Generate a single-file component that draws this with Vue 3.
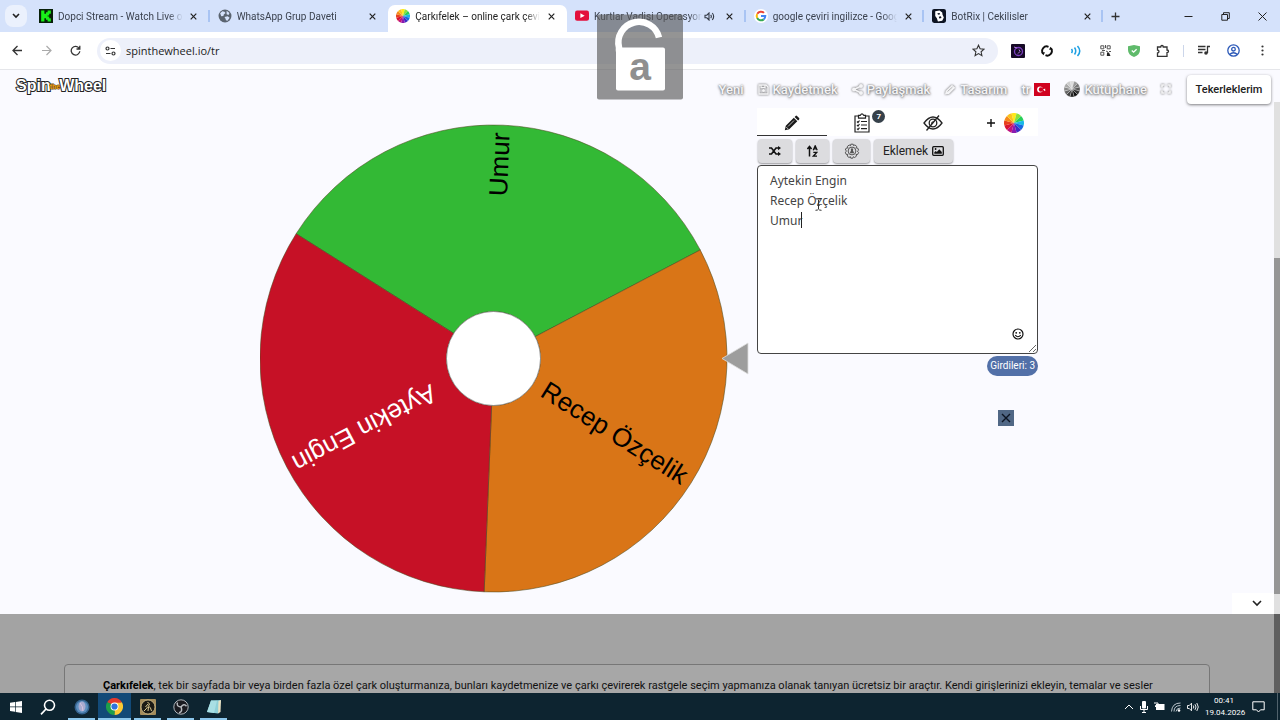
<script setup>
import { ref } from 'vue'

const tabs = [
  { icon: 'kick', title: 'Dopci Stream - Watch Live on' },
  { icon: 'globe', title: 'WhatsApp Grup Daveti' },
  { icon: 'wheel', title: 'Çarkıfelek – online çark çevirin', active: true },
  { icon: 'yt', title: 'Kurtlar Vadisi Operasyon', sound: true },
  { icon: 'google', title: 'google çeviri ingilizce - Goog' },
  { icon: 'botrix', title: 'BotRix | Cekilisler' },
]
const entries = ref('Aytekin Engin\nRecep Özçelik\nUmur')

const C = { x: 233.5, y: 235.5, r: 233.5, hole: 47 }
const slices = [
  { name: 'Umur', from: -147.7, color: '#33b935', ink: '#000' },
  { name: 'Recep Özçelik', from: -27.7, color: '#d97517', ink: '#000' },
  { name: 'Aytekin Engin', from: 92.3, color: '#c61126', ink: '#fff' },
]
const pt = (r, deg) => {
  const a = (deg * Math.PI) / 180
  return `${(C.x + r * Math.cos(a)).toFixed(2)} ${(C.y + r * Math.sin(a)).toFixed(2)}`
}
const ring = (s) =>
  `M${pt(C.hole, s.from)}L${pt(C.r, s.from)}A${C.r} ${C.r} 0 0 1 ${pt(C.r, s.from + 120)}L${pt(C.hole, s.from + 120)}A${C.hole} ${C.hole} 0 0 0 ${pt(C.hole, s.from)}Z`

const hues = ['#ffe81a', '#8be03a', '#27cf5a', '#19b8e8', '#1669e0', '#3d2bc4', '#8a1bb0', '#c0127e', '#d81330', '#e8401c', '#f58a1c', '#fbc21b']
const greys = ['#ddd', '#999', '#777', '#555', '#333', '#111', '#222', '#444', '#666', '#888', '#aaa', '#ccc']
const wedge = (i) => {
  const a = ((i * 30 - 105) * Math.PI) / 180
  const b = ((i * 30 - 75) * Math.PI) / 180
  return `M10 10L${(10 + 10 * Math.cos(a)).toFixed(2)} ${(10 + 10 * Math.sin(a)).toFixed(2)}A10 10 0 0 1 ${(10 + 10 * Math.cos(b)).toFixed(2)} ${(10 + 10 * Math.sin(b)).toFixed(2)}Z`
}
</script>

<template>
  <div class="desktop">
    <div class="tabstrip">
      <button class="tab-search" aria-label="Sekmelerde ara">
        <svg width="8" height="6" viewBox="0 0 8 6"><path d="M1 1l3 3 3-3" fill="none" stroke="#222" stroke-width="1.6" /></svg>
      </button>
      <div class="tabs">
        <div v-for="(t, i) in tabs" :key="i" class="tab" :class="{ active: t.active, sep: i === 0 || i > 2 }">
          <svg v-if="t.icon === 'kick'" class="fav" viewBox="0 0 13 13"><rect width="13" height="13" fill="#082008" /><path d="M2 1.500h3v3h1.500v-1.500h1.500v-1.500h3v3h-1.500v1.500h-1.500v1h1.500v1.500h1.500v3h-3v-1.500h-1.500v-1.500h-1.500v3h-3z" fill="#18f018" /></svg>
          <svg v-else-if="t.icon === 'globe'" class="fav" viewBox="0 0 13 13"><circle cx="6.500" cy="6.500" r="6" fill="#5b6470" /><path d="M2 4l2-2 2 .6 1 1.200-1.600 1.200-.4 1.600-2 .2zM8 1.600l2.600 2-.8 2-1.800-.8zM6 7.500l3-.8 1.800 1.500-2 2.600-1.400-.4-.4-1.400z" fill="#d5e2fb" /></svg>
          <svg v-else-if="t.icon === 'wheel'" class="fav" viewBox="0 0 20 20"><path v-for="(h, k) in hues" :key="k" :d="wedge(k)" :fill="h" /></svg>
          <svg v-else-if="t.icon === 'yt'" class="fav" viewBox="0 0 13 13"><rect y="1.500" width="13" height="9.500" rx="2" fill="#e3103c" /><path d="M5 4l4 2.200-4 2.200z" fill="#fff" /></svg>
          <svg v-else-if="t.icon === 'google'" class="fav" viewBox="0 0 14 14"><circle cx="7" cy="7" r="7" fill="#fff" /><g fill="none" stroke-width="2"><path d="M3.300 4.800A4.300 4.300 0 0 1 10 3.900" stroke="#ea4335" /><path d="M3.200 9A4.300 4.300 0 0 1 3.200 5" stroke="#fbbc05" /><path d="M3.200 9A4.300 4.300 0 0 0 9.700 10.400" stroke="#34a853" /><path d="M7 7.100h4.300a4.300 4.300 0 0 1-1.600 3.300" stroke="#4285f4" /></g></svg>
          <svg v-else class="fav" viewBox="0 0 13 13"><rect width="13" height="13" rx="2" fill="#0d1423" /><path d="M3 2l4-.5 2.500 1.800.3 2 1.200 2.500-1.500 3-4 .7-1-3-1.500-2z" fill="#fff" /><path d="M5 4l2-.4.6 1.200-2 .6zM6.300 7.300l2-.5.5 1.500-2 .6z" fill="#0d1423" /></svg>
          <span class="title">{{ t.title }}</span>
          <svg v-if="t.sound" class="snd" width="11" height="9" viewBox="0 0 11 9"><path d="M1 3.200h1.800l2.200-2.200v7l-2.200-2.200h-1.800zM6.700 2.800q1.300 1.700 0 3.400M8.300 1q2.700 3.500 0 7" fill="none" stroke="#333a47" stroke-width="1.100" /></svg>
          <button class="close" aria-label="Sekmeyi kapat"><svg width="7" height="7" viewBox="0 0 7 7"><path d="M.7.7l5.600 5.600M6.300.7L.7 6.300" stroke="#222" stroke-width="1.200" /></svg></button>
        </div>
      </div>
      <div class="winctl">
        <button aria-label="Yeni sekme" class="newtab"><svg width="9" height="9" viewBox="0 0 9 9"><path d="M4.500.5v8M.5 4.500h8" stroke="#333" stroke-width="1.300" /></svg></button>
        <button aria-label="Küçült"><svg width="9" height="9" viewBox="0 0 9 9"><path d="M.5 4.500h8" stroke="#222" /></svg></button>
        <button aria-label="Önceki boyut"><svg width="9" height="9" viewBox="0 0 9 9"><path d="M.8 2.500h5.700v5.700H.8zM2.500 2.300V.7h5.800v5.800H6.700" fill="none" stroke="#222" /></svg></button>
        <button aria-label="Kapat"><svg width="9" height="9" viewBox="0 0 9 9"><path d="M.5.5l8 8M8.500.5l-8 8" stroke="#222" /></svg></button>
      </div>
    </div>

    <div class="toolbar">
      <button aria-label="Geri"><svg width="11" height="11" viewBox="0 0 11 11"><path d="M10 5.500H1.500M5.500 1L1 5.500 5.500 10" fill="none" stroke="#333" stroke-width="1.300" /></svg></button>
      <button aria-label="İleri"><svg width="11" height="11" viewBox="0 0 11 11"><path d="M1 5.500h8.500M5.500 1L10 5.500 5.500 10" fill="none" stroke="#aaa" stroke-width="1.200" /></svg></button>
      <button aria-label="Yenile"><svg width="11" height="11" viewBox="0 0 11 11"><path d="M9.200 3.500A4.300 4.300 0 1 0 9.800 6.200M9.800.7v3.300H6.500" fill="none" stroke="#333" stroke-width="1.300" /></svg></button>
      <div class="omni">
        <span class="site"><svg width="11" height="10" viewBox="0 0 11 10"><g fill="none" stroke="#333" stroke-width="1.200"><circle cx="2.500" cy="2.500" r="1.500" /><path d="M5.500 2.500h4.500M1 7.500h4.500" /><circle cx="8.500" cy="7.500" r="1.500" /></g></svg></span>
        <input class="url" aria-label="Adres" value="spinthewheel.io/tr" />
        <button class="star" aria-label="Yer işareti"><svg width="13" height="13" viewBox="0 0 13 13"><path d="M6.500 1.200l1.600 3.600 3.900.4-2.900 2.600.8 3.800-3.400-2-3.400 2 .8-3.800L1 5.200l3.900-.4z" fill="none" stroke="#333" stroke-width="1.100" /></svg></button>
      </div>
      <div class="exts">
        <button aria-label="Eklenti 1"><svg width="14" height="14" viewBox="0 0 14 14"><rect width="14" height="14" rx="1" fill="#160a26" /><circle cx="7.500" cy="7.500" r="4" fill="none" stroke="#7c3fc0" stroke-width="1.300" /><path d="M3 3l3 1M8 5.500l1 2-2 2" stroke="#b37be0" fill="none" /></svg></button>
        <button aria-label="Eklenti 2"><svg width="12" height="12" viewBox="0 0 12 12"><path d="M2 8.500A4.500 4.500 0 0 1 7.500 1.800M10 3.500A4.500 4.500 0 0 1 4.500 10.200" fill="none" stroke="#111" stroke-width="1.900" /><path d="M0 7.500l4-.2-1.500 3zM12 4.500l-4 .2 1.500-3z" fill="#111" /></svg></button>
        <button aria-label="Eklenti 3"><svg width="12" height="12" viewBox="0 0 12 12"><path d="M1.500 4q1.500 2 0 4M4.500 2.500q2.500 3.500 0 7M7.500 1q4.500 5 0 10" fill="none" stroke="#1c9fe3" stroke-width="1.500" /></svg></button>
        <button aria-label="Eklenti 4"><svg width="11" height="11" viewBox="0 0 11 11"><g fill="none" stroke="#555"><path d="M.8.800h3v3H.8zM7.200.800h3v3h-3zM.8 7.200h3v3h-3z" stroke-width="1" /><path d="M5.500 0v3M2 5.500h3M6 6l2 1M9 6.500h2" /></g><path d="M7 7.500h2l1.500 3.500H6.800z" fill="#222" /></svg></button>
        <button aria-label="Eklenti 5"><svg width="12" height="12" viewBox="0 0 12 12"><path d="M0 1.200L6 0l6 1.200V5q0 5-6 7-6-2-6-7z" fill="#5fba6b" /><path d="M3.800 5.500l1.800 1.700 3-3" fill="none" stroke="#fff" stroke-width="1.300" /></svg></button>
        <button aria-label="Eklentiler"><svg width="14" height="14" viewBox="0 0 14 14"><path d="M1.500 3h3.200q0-1.500 1.300-1.500T7.300 3h3.700v3q1.500 0 1.500 1.300T11 8.600V12.300H1.500V9q1.500-.2 1.500-1.500T1.500 6z" fill="none" stroke="#333" stroke-width="1.300" /></svg></button>
        <i class="vbar"></i>
        <button aria-label="Medya"><svg width="12" height="11" viewBox="0 0 12 11"><path d="M0 1.500h7.500M0 4.500h7.500M0 7.500h4.500M9.500 8V1.500H12" fill="none" stroke="#333" stroke-width="1.300" /><circle cx="8" cy="8" r="1.800" fill="#333" /></svg></button>
        <button aria-label="Profil"><svg width="13" height="13" viewBox="0 0 13 13"><g fill="none" stroke="#2c59b8" stroke-width="1.300"><circle cx="6.500" cy="6.500" r="5.700" /><circle cx="6.500" cy="5.200" r="1.800" /><path d="M2.500 10.500q4-3.500 8 0" /></g></svg></button>
        <button aria-label="Menü"><svg width="3" height="11" viewBox="0 0 3 11"><g fill="#333"><circle cx="1.500" cy="1.500" r="1.100" /><circle cx="1.500" cy="5.500" r="1.100" /><circle cx="1.500" cy="9.500" r="1.100" /></g></svg></button>
      </div>
    </div>

    <div class="page">
      <div class="content">
        <section class="app">
          <header>
            <a class="logo" href="#">Spin<small>the</small>Wheel</a>
            <nav>
              <a href="#">Yeni</a>
              <a href="#"><svg width="11" height="11" viewBox="0 0 11 11"><path d="M1 1h7l2 2v7H1zM3 1v2.500h4V1" fill="none" stroke="currentColor" stroke-width="1.300" /><circle cx="5.500" cy="6.500" r="1.500" fill="currentColor" /></svg>Kaydetmek</a>
              <a href="#"><svg width="11" height="11" viewBox="0 0 11 11"><path d="M9 2L2 5.500 9 9" fill="none" stroke="currentColor" stroke-width="1.500" /><g fill="currentColor"><circle cx="9" cy="2" r="2" /><circle cx="2" cy="5.500" r="2" /><circle cx="9" cy="9" r="2" /></g></svg>Paylaşmak</a>
              <a href="#"><svg width="12" height="11" viewBox="0 0 12 11"><path d="M1 10.500l.6-3.500L8 .8 11.300 3.700 5 10z" fill="currentColor" /><path d="M3.500 7.500l5-4.500" stroke="#999" stroke-width=".7" /></svg>Tasarım</a>
              <a href="#">tr<svg class="flag" width="16" height="13" viewBox="0 0 16 13"><rect width="16" height="13" fill="#d0021f" /><circle cx="6" cy="6.500" r="2.900" fill="#fff" /><circle cx="7" cy="6.500" r="2.200" fill="#d0021f" /><path d="M9 6.500l2.200-1-.2 1 .8.8-1 .1-.6.900-.3-1z" fill="#fff" /></svg></a>
              <a href="#"><svg class="flag" width="16" height="16" viewBox="0 0 20 20"><path v-for="(h, k) in greys" :key="k" :d="wedge(k)" :fill="h" stroke="#eee" stroke-width=".4" /></svg>Kütüphane</a>
              <a href="#" aria-label="Tam ekran"><svg width="10" height="10" viewBox="0 0 10 10"><path d="M1 3.500V1h2.500M6.500 1H9v2.500M9 6.500V9H6.500M3.500 9H1V6.500" fill="none" stroke="currentColor" stroke-width="1.600" /></svg></a>
              <button class="mine">Tekerleklerim</button>
            </nav>
          </header>

          <main>
            <svg class="wheel" width="489" height="470" viewBox="0 0 489 470">
              <path v-for="s in slices" :key="s.name" :d="ring(s)" :fill="s.color" stroke="#4d4a1e" stroke-opacity=".7" stroke-width=".8" />
              <circle :cx="C.x" :cy="C.y" :r="C.hole" fill="#fff" stroke="#666" stroke-width=".6" />
              <text v-for="s in slices" :key="s.name" :x="C.x + 226" :y="C.y + 7" text-anchor="end" :fill="s.ink" :transform="`rotate(${s.from + 60} ${C.x} ${C.y})`">{{ s.name }}</text>
              <path d="M462 235.500l26-15.500v31z" fill="#9d9d9d" stroke="#ddd" stroke-width=".8" />
            </svg>

            <div class="panel">
              <div class="modes">
                <button class="on" aria-label="Düzenle"><svg width="16" height="16" viewBox="0 0 16 16"><path d="M.8 15.200l1-4.400L9.800 2.700l3.500 3.500-8.100 8zM10.600 1.900l1-1q.7-.6 1.400 0l2.100 2.100q.6.700 0 1.400l-1 1z" fill="#1a1a1a" /><path d="M4 11.500l6-6M2.200 12l2 2" stroke="#fff" stroke-width=".7" /></svg></button>
                <button aria-label="Sonuçlar"><span class="badged"><svg width="16" height="20" viewBox="0 0 16 20"><g fill="none" stroke="#222" stroke-width="1.200"><path d="M4.500 3H1v16h14V3h-3.500M4.500 2.300H6.300Q8-.5 9.700 2.300h1.800v2.900h-7z" /><path d="M3 8.500l1 1 1.500-2M7 8.500h6M3 12l1 1 1.500-2M7 12h6M3 15.700l1 1 1.500-2M7 15.700h6" /></g></svg><b>7</b></span></button>
                <button aria-label="Gizle"><svg width="20" height="16" viewBox="0 0 20 16"><g fill="none" stroke="#222" stroke-width="1.300"><path d="M1 8q9-12 18 0-9 12-18 0z" /><circle cx="10" cy="8" r="3.800" /><path d="M3.500 15.500L16 .5" /></g><path d="M8 8.500q0-2 2.500-2.500l-1.500 3z" fill="#222" /></svg></button>
                <button class="add" aria-label="Çark ekle"><svg width="8" height="8" viewBox="0 0 8 8"><path d="M4 0v8M0 4h8" stroke="#111" stroke-width="1.400" /></svg><svg width="20" height="20" viewBox="0 0 20 20"><path v-for="(h, k) in hues" :key="k" :d="wedge(k)" :fill="h" /></svg></button>
              </div>
              <div class="tools">
                <button class="w34" aria-label="Karıştır"><svg width="12" height="10" viewBox="0 0 12 10"><path d="M0 2h2.500l4.500 6h3M0 8h2.500L7 2h3" fill="none" stroke="#111" stroke-width="1.600" /><path d="M9 0l3 2-3 2.200zM9 5.800l3 2.200-3 2z" fill="#111" /></svg></button>
                <button class="w33" aria-label="Sırala"><svg width="11" height="12" viewBox="0 0 11 12"><path d="M2.500 11.500V2M.4 4l2.100-2.500L4.600 4" fill="none" stroke="#111" stroke-width="1.500" /><path d="M6.200 5.200L8.200.8l2 4.400M7 3.800h2.500M6.300 7.300h3.600l-3.600 3.900H10" fill="none" stroke="#111" stroke-width="1.300" /></svg></button>
                <button class="w37" aria-label="Ayarlar"><svg width="16" height="16" viewBox="0 0 16 16"><g fill="none" stroke="#444" stroke-width=".9"><path d="M6.800 1.200h2.400l.4 1.500 1.300-.8 1.800 1.500-.6 1.500 1.600.2.900 2.100-1.200 1 1.200 1.300-1 2-1.600.1.500 1.500-1.900 1.400-1.300-.8-.5 1.500H6.800l-.4-1.500-1.400.8-1.800-1.500.6-1.500-1.700-.2-.8-2.100 1.300-1.200L1.300 7l1-2 1.600-.1-.5-1.500L5.200 2l1.300.8z" /><circle cx="8" cy="8" r="3.900" /></g><path d="M6 10.300q0-2 1-2.300-.6-2.800 1-2.800t1 2.800q1 .3 1 2.300z" fill="#555" /></svg></button>
                <button class="w79">Eklemek <svg width="12" height="10" viewBox="0 0 12 10"><rect x=".7" y=".7" width="10.600" height="8.600" rx="1" fill="none" stroke="#111" stroke-width="1.300" /><path d="M2.300 7.800V6.300l1.500-1.300 1 1 2.500-2.800 2.500 2.800v1.800z" fill="#111" /><circle cx="3.600" cy="3" r=".9" fill="#111" /></svg></button>
              </div>
              <div class="editor">
                <textarea v-model="entries" aria-label="Girdiler" spellcheck="false"></textarea>
                <i class="caret"></i>
                <svg class="ibeam" width="7" height="13" viewBox="0 0 7 13"><path d="M.5.700q2.500 0 3 1.200.5-1.200 3-1.200M3.500 2v9M.5 12.300q2.500 0 3-1.200.5 1.200 3 1.200M2.300 7.500h2.400" fill="none" stroke="#333" /></svg>
                <button class="smile" aria-label="Emoji"><svg width="12" height="12" viewBox="0 0 12 12"><circle cx="6" cy="6" r="5" fill="none" stroke="#111" stroke-width="1.200" /><circle cx="4.200" cy="4.800" r=".9" fill="#111" /><circle cx="7.800" cy="4.800" r=".9" fill="#111" /><path d="M3.200 7.200q2.800 3 5.600 0" fill="none" stroke="#111" stroke-width="1.100" /></svg></button>
              </div>
              <span class="count">Girdileri: 3</span>
              <button class="dismiss" aria-label="Reklamı kapat"><svg width="10" height="10" viewBox="0 0 10 10"><path d="M1 1l8 8M9 1L1 9" stroke="#0c1422" stroke-width="1.400" /></svg></button>
            </div>
          </main>
          <button class="down" aria-label="Aşağı"><svg width="10" height="7" viewBox="0 0 10 7"><path d="M1 1l4 4 4-4" fill="none" stroke="#222" stroke-width="1.600" /></svg></button>
        </section>

        <section class="about">
          <p><b>Çarkıfelek</b>, tek bir sayfada bir veya birden fazla özel çark oluşturmanıza, bunları kaydetmenize ve çarkı çevirerek rastgele seçim yapmanıza olanak tanıyan ücretsiz bir araçtır. Kendi girişlerinizi ekleyin, temalar ve sesler</p>
        </section>
      </div>
      <div class="scroll"><i class="gap"></i><i class="track"></i><i class="thumb"></i><i class="tail"></i><i class="dark"></i></div>
    </div>

    <div class="taskbar">
      <button aria-label="Başlat"><svg width="12" height="12" viewBox="0 0 12 12"><path d="M0 1.800l5-.7v4.500H0zM5.700 1L12 0v5.600H5.700zM0 6.300h5v4.500l-5-.7zM5.700 6.300H12V12l-6.300-1z" fill="#fff" /></svg></button>
      <button aria-label="Ara"><svg width="16" height="16" viewBox="0 0 16 16"><circle cx="9.500" cy="6.300" r="5" fill="none" stroke="#fff" stroke-width="1.600" /><path d="M6 10L1 15.300" stroke="#fff" stroke-width="1.700" /></svg></button>
      <div class="apps">
        <button aria-label="Uygulama"><svg width="16" height="16" viewBox="0 0 16 16"><circle cx="8" cy="8" r="7.500" fill="#34628e" /><circle cx="8" cy="8" r="6" fill="#5c8fbe" /><ellipse cx="8" cy="7.500" rx="3.500" ry="5" fill="#a9abd0" /><path d="M6 4q3 3 3 8" stroke="#d9c4dc" fill="none" /></svg></button>
        <button class="cur" aria-label="Chrome"><svg width="17" height="17" viewBox="0 0 18 18"><path d="M9 9L1.200 4.500A9 9 0 0 1 16.800 4.500z" fill="#e33b2e" /><path d="M9 9L16.800 4.500A9 9 0 0 1 9 18z" fill="#fcc934" /><path d="M9 9v9A9 9 0 0 1 1.200 4.500z" fill="#1e9e4a" /><path d="M9 5h7.900l-4 6.500L9 18 12 9z" fill="#fcc934" /><path d="M5.500 11L1.200 4.500 7 7z" fill="#1e9e4a" /><circle cx="9" cy="9" r="4.200" fill="#fff" /><circle cx="9" cy="9" r="3.300" fill="#2f74dd" /></svg></button>
        <button aria-label="Oyun"><svg width="16" height="16" viewBox="0 0 16 16"><rect width="16" height="16" rx="1" fill="#a58d5b" /><circle cx="8" cy="8" r="7" fill="#1b1a14" stroke="#d6c38f" stroke-width=".8" /><path d="M7.500 3l2 2-1 2 2 2 1 3M8 5L5.500 8M8 7.500L6 10l-2 2M8.500 8l-.5 4" fill="none" stroke="#d9c78f" stroke-width="1" /></svg></button>
        <button aria-label="OBS"><svg width="16" height="16" viewBox="0 0 16 16"><circle cx="8" cy="8" r="7.200" fill="#1a1b20" stroke="#aeb3b8" stroke-width="1" /><path d="M8 8q-5-.5-3.500-4.500M8 8q3-4 5.500-.8M8 8q2 4.500-2 5.700" fill="none" stroke="#b8bcc0" stroke-width="1.500" /></svg></button>
        <button aria-label="Not Defteri"><svg width="16" height="16" viewBox="0 0 16 16"><path d="M5 1.500L15 1l-3 13.500L1 13z" fill="#8fd0d8" /><path d="M5 1.500l6 .2-3 12.300-7-1z" fill="#a9dfe4" /><path d="M12.500 2L15 1l-.5 12-2.500 1.500z" fill="#e9e2c4" /></svg></button>
      </div>
      <div class="tray">
        <svg width="10" height="6" viewBox="0 0 10 6"><path d="M1 5l4-4 4 4" fill="none" stroke="#fff" /></svg>
        <svg width="8" height="12" viewBox="0 0 8 12"><rect x="2" width="4" height="7.500" rx="1" fill="#fff" /><path d="M.5 5v3.500h7V5M4 9v3M2 11.500h4" fill="none" stroke="#fff" /></svg>
        <svg width="11" height="9" viewBox="0 0 11 9"><rect x="2.500" y="2.500" width="7.500" height="5" fill="#fff" stroke="#fff" /><path d="M0 1h4v2.500H1.500V5" fill="none" stroke="#fff" /></svg>
        <svg width="10" height="10" viewBox="0 0 10 10"><path d="M.5 9.500Q1 1 9.500 1M3 9.500Q3 3.500 9.500 3.500M5 9.500Q5.500 6 9.500 6" fill="none" stroke="#b9c4ca" stroke-width="1" /><circle cx="8" cy="8.500" r="1.300" fill="#fff" /></svg>
        <svg width="12" height="10" viewBox="0 0 12 10"><path d="M.5 3.500h1.800L4.500 1.200v7.600L2.300 6.500H.5zM6.300 3.500q1 1.500 0 3M8 2.200q2 2.800 0 5.600M9.800 1q3 4 0 8" fill="none" stroke="#fff" stroke-width=".9" /></svg>
        <time>00:41<br />19.04.2026</time>
        <svg width="13" height="12" viewBox="0 0 13 12"><path d="M.8.800h11.400v8H8.500L6.500 11l-2-2.200H.8z" fill="none" stroke="#fff" /></svg>
        <i class="peek"></i>
      </div>
    </div>

    <svg class="lock" viewBox="0 0 86 85">
      <rect width="86" height="85" rx="2" fill="#5a5a5a" fill-opacity=".65" />
      <path d="M22 37V33A20.500 20.500 0 0 1 62 23" fill="none" stroke="#fff" stroke-width="6.500" />
      <rect x="19" y="33" width="49" height="43" rx="2" fill="#fff" />
      <text x="43" y="65" text-anchor="middle">a</text>
    </svg>
  </div>
</template>

<style>
body { margin: 0; overflow: hidden; }
</style>

<style scoped>
* { box-sizing: border-box; }
.desktop { position: relative; height: 100vh; display: flex; flex-direction: column; overflow: hidden; font-family: Roboto, "Liberation Sans", sans-serif; background: #fff; }
button { border: 0; padding: 0; margin: 0; background: none; font: inherit; color: inherit; display: flex; align-items: center; justify-content: center; }
svg { display: block; flex: none; }
a { color: inherit; text-decoration: none; }

.tabstrip { flex: none; height: 32px; background: #d5e2fb; display: flex; align-items: stretch; font-family: Roboto, "Liberation Sans", sans-serif; }
.tab-search { width: 22px; height: 22px; margin: 5px 4px 5px 5px; border-radius: 8px; background: #ebf1fd; }
.tabs { flex: 1; display: grid; grid-template-columns: repeat(6, 1fr); }
.tab { position: relative; display: flex; align-items: center; padding: 0 9px 0 8px; min-width: 0; font-size: 10px; color: #3c4350; }
.tab.sep::after { content: ""; position: absolute; right: 0; top: 10px; width: 2px; height: 12px; background: #a9c4f3; }
.tab.active { color: #222; margin: 5px 0 0; padding-bottom: 5px; background: #fff; border-radius: 7px 7px 0 0; }
.fav { width: 14px; height: 14px; margin-right: 5px; }
.title { flex: 1; min-width: 0; overflow: hidden; white-space: nowrap; mask-image: linear-gradient(90deg, #000 88%, transparent); }
.snd { margin: 0 4px 0 2px; }
.close { width: 14px; height: 14px; margin-left: 4px; }
.winctl { width: 177px; display: flex; align-items: center; gap: 19px; padding: 0 9px 0 3px; }
.winctl button { width: 18px; height: 18px; }
.winctl .newtab { margin-right: auto; }

.toolbar { flex: none; height: 38px; display: flex; align-items: center; padding: 0 9px 0 8px; border-bottom: 1px solid #e5e6ea; background: #fff; gap: 11px; }
.toolbar button { width: 18px; height: 18px; }
.omni { flex: 1; height: 26px; border-radius: 13px; background: #edf0fa; display: flex; align-items: center; margin-left: 2px; padding: 0 11px 0 3px; }
.site { width: 21px; height: 21px; border-radius: 50%; background: #fff; display: flex; align-items: center; justify-content: center; }
.url { flex: 1; border: 0; background: none; padding: 0 0 0 5px; outline: none; font: 11px "Open Sans", "Noto Sans", sans-serif; color: #222; }
.exts { display: flex; align-items: center; gap: 11px; }
.vbar { width: 1px; height: 12px; background: #ccd6ea; }

.page { flex: 1; min-height: 0; display: flex; background: #fafaff; }
.content { flex: 1; min-width: 0; overflow: hidden; display: flex; flex-direction: column; }
.app { position: relative; flex: none; background: #fafaff; }
header { display: flex; align-items: center; justify-content: space-between; height: 38px; padding: 0 3px 0 16px; }
.logo { display: flex; align-items: center; padding-bottom: 6px; font: 700 16px "Liberation Sans", sans-serif; color: #fff; -webkit-text-stroke: 2px #222; paint-order: stroke fill; }
.logo small { font-size: 7px; color: #f2a51c; margin: 0 -1px; z-index: 1; -webkit-text-stroke: 1px #5a3a00; paint-order: stroke fill; }
nav { display: flex; align-items: center; gap: 14px; font-size: 13px; font-weight: 500; color: #f4f4f6; text-shadow: 0 0 2px #666, 0 1px 3px #777; }
nav a { display: flex; align-items: center; gap: 4px; }
nav a svg { filter: drop-shadow(0 0 1px #555); }
nav .flag { filter: none; }
.mine { width: 84px; height: 29px; margin-left: 2px; background: #fff; border-radius: 4px; color: #222; font-size: 11px; font-weight: 500; text-shadow: none; box-shadow: 0 1px 3px rgba(0, 0, 0, .5); }

main { display: flex; justify-content: center; gap: 8px; min-height: 506px; padding-left: 24px; }
.wheel { margin-top: 15px; }
.wheel text { font: 26px "Liberation Sans", sans-serif; }
.panel { width: 281px; display: flex; flex-direction: column; }
.modes { display: grid; grid-template-columns: repeat(4, 1fr); height: 28px; background: #fff; }
.modes button { padding-top: 2px; }
.modes .on { border-bottom: 1px solid #333; }
.badged { position: relative; }
.badged b { position: absolute; left: 18px; top: -3px; width: 13px; height: 13px; border-radius: 50%; background: #36414a; color: #fff; font-size: 8px; line-height: 13px; text-align: center; }
.modes .add { gap: 9px; padding-left: 6px; }
.tools { display: flex; gap: 4px; padding: 3px 0 0 1px; height: 29px; }
.tools button { height: 24px; background: #dcdcdf; border-radius: 4px; box-shadow: 0 1px 2px rgba(0, 0, 0, .4); font-size: 12px; color: #222; gap: 4px; }
.tools .w33 { width: 33px; }
.tools .w34 { width: 34px; }
.tools .w37 { width: 37px; }
.tools .w79 { width: 79px; }
.editor { position: relative; }
textarea { display: block; width: 100%; height: 189px; padding: 5px 12px; border: 1px solid #444; border-radius: 4px; background: #fff; resize: vertical; outline: none; font: 12px/20px "Noto Sans", sans-serif; color: #444; }
.caret { position: absolute; left: 44px; top: 47px; width: 1px; height: 16px; background: #222; }
.ibeam { position: absolute; left: 58px; top: 33px; }
.smile { position: absolute; right: 14px; bottom: 14px; width: 13px; height: 13px; }
.count { align-self: flex-end; margin-top: 2px; height: 20px; padding: 0 3px; border-radius: 10px; background: #5270a8; color: #fff; font-size: 10px; line-height: 20px; }
.dismiss { align-self: flex-end; margin: 34px 24px 0 0; width: 16px; height: 16px; background: #506785; }
.down { position: absolute; right: 0; bottom: 0; width: 42px; height: 21px; background: #fff; padding-left: 7px; }

.about { flex: 1; background: #a3a3a3; padding: 50px 64px 0; min-height: 0; overflow: hidden; }
.about p { margin: 0; height: 80px; padding: 13px 38px; border: 1px solid #777; border-radius: 4px; background: #a7a7a7; font-size: 11px; line-height: 16px; color: #111; }
.about b { font-weight: 700; color: #000; }
.scroll { width: 6px; display: flex; flex-direction: column; }
.scroll .gap { height: 32px; }
.scroll .track { height: 156px; background: #e0e0e0; }
.scroll .thumb { height: 336px; background: #969696; }
.scroll .tail { height: 20px; background: #e0e0e0; }
.scroll .dark { flex: 1; background: #5f5f5f; }

.taskbar { flex: none; height: 27px; background: #0d2430; display: flex; }
.taskbar button { width: 32px; }
.apps { display: flex; margin-left: 1px; }
.apps button { width: 33px; background: linear-gradient(#8cc7ec, #8cc7ec) center bottom / 27px 2px no-repeat; }
.apps .cur { background: linear-gradient(#8cc7ec, #8cc7ec) center bottom / 33px 2px no-repeat #124a78; }
.tray { margin-left: auto; display: flex; align-items: center; gap: 6px; }
time { display: flow-root; color: #fff; font: 8px/12px Roboto, "Liberation Sans", sans-serif; text-align: center; width: 38px; white-space: nowrap; }
.tray time + svg { margin-left: 3px; }
.peek { width: 1px; height: 27px; margin: 0 2px 0 6px; background: #50626c; }

.lock { position: absolute; left: calc(50% - 43px); top: 14px; width: 86px; height: 86px; }
.lock text { font: 700 39px "Liberation Sans", sans-serif; fill: #8f8f8f; }
</style>
